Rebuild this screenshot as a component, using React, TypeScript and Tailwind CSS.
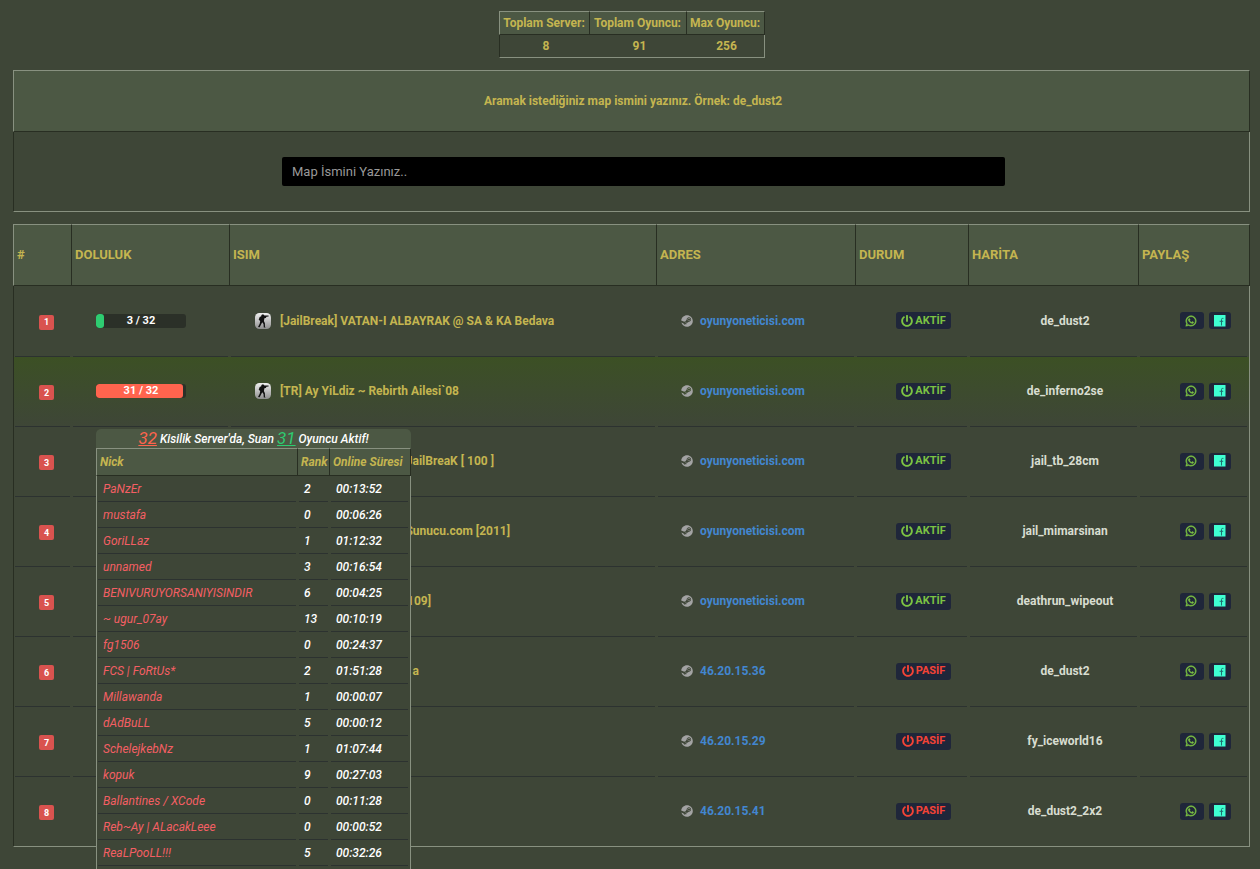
import { FaPowerOff, FaSteam, FaWhatsapp } from "react-icons/fa";

type Server = {
  bar: string;
  fill: string;
  name: string;
  nameClass?: string;
  address: string;
  active: boolean;
  map: string;
};

const low = "bg-[#2ecc71] w-[9%]";
const full = "bg-[#ff644e] w-[97%]";

const servers: Server[] = [
  { bar: "3 / 32", fill: low, name: "[JailBreak] VATAN-I ALBAYRAK @ SA & KA Bedava", address: "oyunyoneticisi.com", active: true, map: "de_dust2" },
  { bar: "31 / 32", fill: full, name: "[TR] Ay YiLdiz ~ Rebirth Ailesi`08", address: "oyunyoneticisi.com", active: true, map: "de_inferno2se" },
  { bar: "", fill: low, name: "JailBreaK [ 100 ]", nameClass: "w-[214px] text-right", address: "oyunyoneticisi.com", active: true, map: "jail_tb_28cm" },
  { bar: "", fill: low, name: "Sunucu.com [2011]", nameClass: "w-[230px] text-right", address: "oyunyoneticisi.com", active: true, map: "jail_mimarsinan" },
  { bar: "", fill: low, name: "109]", nameClass: "w-[151px] text-right", address: "oyunyoneticisi.com", active: true, map: "deathrun_wipeout" },
  { bar: "", fill: low, name: "a", nameClass: "w-[139px] text-right", address: "46.20.15.36", active: false, map: "de_dust2" },
  { bar: "", fill: low, name: "", address: "46.20.15.29", active: false, map: "fy_iceworld16" },
  { bar: "", fill: low, name: "", address: "46.20.15.41", active: false, map: "de_dust2_2x2" },
];

const players: [string, number, string][] = [
  ["PaNzEr", 2, "00:13:52"],
  ["mustafa", 0, "00:06:26"],
  ["GoriLLaz", 1, "01:12:32"],
  ["unnamed", 3, "00:16:54"],
  ["BENIVURUYORSANIYISINDIR", 6, "00:04:25"],
  ["~ ugur_07ay", 13, "00:10:19"],
  ["fg1506", 0, "00:24:37"],
  ["FCS | FoRtUs*", 2, "01:51:28"],
  ["Millawanda", 1, "00:00:07"],
  ["dAdBuLL", 5, "00:00:12"],
  ["SchelejkebNz", 1, "01:07:44"],
  ["kopuk", 9, "00:27:03"],
  ["Ballantines / XCode", 0, "00:11:28"],
  ["Reb~Ay | ALacakLeee", 0, "00:00:52"],
  ["ReaLPooLL!!!", 5, "00:32:26"],
];

const th =
  "border-t border-t-[#889180] border-r border-r-[#282e22] border-b border-b-[#282e22] first:border-l first:border-l-[#889180] bg-[#4c5844] text-[#c4b550] font-bold";

const line =
  "relative after:absolute after:bottom-0 after:left-px after:right-[2px] after:h-px after:bg-[#2c3230]";

function SoldierIcon() {
  return (
    <svg viewBox="0 0 16 16" className="size-4 shrink-0" aria-hidden="true">
      <defs>
        <linearGradient id="tile" x1="0" y1="0" x2="0" y2="1">
          <stop offset="0" stopColor="#f0f0f0" />
          <stop offset="1" stopColor="#8e8e8e" />
        </linearGradient>
      </defs>
      <rect width="16" height="16" rx="4.5" fill="url(#tile)" />
      <path
        d="M6.4 1.9 8 1.2 9 1.9 9.3 2.6 13.6 2.6V3.5L11.5 3.7 10.8 4.9 9.4 5.2 8.9 7.9 9.9 10.2 10 13.8 10.7 14.6H8.8L8.5 11 7.2 9.2 6.2 11.3 4.6 14.3 3 14 4.7 10.8 5.2 8 3.7 6.8 4.7 4 6.3 3.3Z"
        fill="#111"
      />
    </svg>
  );
}

function FacebookIcon() {
  return (
    <svg viewBox="0 0 12 12" className="size-3" aria-hidden="true">
      <path d="M0 0h11.5v11.5H0z" fill="#3fffd2" />
      <path d="M9.4 3.4H8.6Q7.5 3.4 7.5 4.5V10.5M5.6 6.3H9.2" fill="none" stroke="#1f6f70" strokeWidth="1" />
    </svg>
  );
}

function PlayerPopup() {
  return (
    <div className="absolute top-[45px] left-0 z-10 w-[315px] rounded-t-[5px] bg-[#3e4637] text-[12px] italic">
      <div className="flex h-[19px] items-center justify-center gap-[3px] rounded-t-[5px] bg-[#4c5844] font-medium text-white">
        <u className="text-[17px] leading-[19px] font-normal text-[#ff644e]">32</u>
        <span>Kisilik Server'da, Suan</span>
        <u className="text-[17px] leading-[19px] font-normal text-[#2ecc71]">31</u>
        <span>Oyuncu Aktif!</span>
      </div>
      <table className="w-full table-fixed border-separate border-spacing-0 text-left">
        <colgroup>
          <col className="w-[202px]" />
          <col className="w-[32px]" />
          <col className="w-[81px]" />
        </colgroup>
        <thead>
          <tr className="h-[28px]">
            <th className={th + " pl-[3px]"}>Nick</th>
            <th className={th + " pl-[3px]"}>Rank</th>
            <th className={th + " pl-[3px]"}>Online Süresi</th>
          </tr>
        </thead>
        <tbody>
          {players.map(([nick, rank, time]) => (
            <tr key={nick} className="h-[26px]">
              <td className={line + " border-l border-l-[#889180] pl-[6px] text-[#f45f64]"}>{nick}</td>
              <td className={line + " pl-[6px] font-medium text-white"}>{rank}</td>
              <td className={line + " border-r border-r-[#889180] pl-[6px] font-medium text-white"}>{time}</td>
            </tr>
          ))}
        </tbody>
      </table>
      <div className="h-8 border-x border-[#889180]" />
    </div>
  );
}

function Row({ server, index }: { server: Server; index: number }) {
  const hovered = index === 1;
  const last = index === servers.length - 1;
  const cell =
    line + (index === 0 ? " h-[71px]" : " h-[70px]") + (last ? " border-b border-b-[#889180] pb-px after:hidden" : " pb-[2px]");
  return (
    <tr className={hovered ? "bg-linear-to-b from-[#3c5024] to-[#3e4637]" : ""}>
      <td className={cell + " border-l border-l-[#282e22] pt-[3px] pl-[25px]"}>
        <span className="flex size-[15px] items-center justify-center rounded-[2px] bg-[#d9534f] text-[9px] font-bold text-white">
          {index + 1}
        </span>
      </td>
      <td className={cell + " pl-6"}>
        <div className="relative h-[14px] w-[90px]">
          <div className="h-full overflow-hidden rounded-[3px] bg-[#2b3028]">
            <div className={"h-full rounded-[3px] " + server.fill} />
          </div>
          <span className="absolute inset-0 flex items-center justify-center text-[11px] font-bold text-white">
            {server.bar}
          </span>
          {hovered && <PlayerPopup />}
        </div>
      </td>
      <td className={cell + " pl-[25px]"}>
        <div className="flex items-center gap-[9px] font-bold text-[#c4b550]">
          <SoldierIcon />
          <span className={server.nameClass}>{server.name}</span>
        </div>
      </td>
      <td className={cell + " pl-6"}>
        <div className="flex items-center gap-[7px]">
          <FaSteam className="size-3 text-[#a3a3a3]" aria-hidden="true" />
          <a href="#" className="font-bold text-[#4286d0]">{server.address}</a>
        </div>
      </td>
      <td className={cell + " pl-[22px]"}>
        <div className="flex justify-center">
          <span
            className={
              "flex h-[17px] w-[55px] items-center justify-center gap-[2px] rounded-[3px] bg-[#1f263a] text-[11px] font-bold " +
              (server.active ? "text-[#7cc243]" : "text-[#f44336]")
            }
          >
            <FaPowerOff className="size-3" aria-hidden="true" />
            {server.active ? "AKTİF" : "PASİF"}
          </span>
        </div>
      </td>
      <td className={cell + " pl-[22px] text-center font-bold text-[#d8ddd0]"}>{server.map}</td>
      <td className={cell + " border-r border-r-[#889180] pl-[22px]"}>
        <div className="flex justify-center gap-[5px]">
          <a href="#" aria-label="WhatsApp" className="flex h-[17px] w-6 items-center rounded-[3px] bg-[#1f263a] pl-[5px] text-[#7cc243]">
            <FaWhatsapp className="size-3" stroke="currentColor" strokeWidth={20} />
          </a>
          <a href="#" aria-label="Facebook" className="flex h-[17px] w-[22px] items-center justify-center rounded-[3px] bg-[#1f263a]">
            <FacebookIcon />
          </a>
        </div>
      </td>
    </tr>
  );
}

export default function App() {
  return (
    <main className="min-h-screen overflow-hidden bg-[#3e4637] pt-[11px] pr-[10px] pb-[22px] pl-[13px] font-['Roboto','Noto_Sans',sans-serif] text-[12px] leading-4">
      <table className="mx-auto mb-3 border-separate border-spacing-0 text-center font-bold text-[#c4b550]">
        <thead>
          <tr className="h-[24px]">
            <th className={th + " w-[91px] whitespace-nowrap"}>Toplam Server:</th>
            <th className={th + " w-[97px] whitespace-nowrap"}>Toplam Oyuncu:</th>
            <th className={th + " w-[78px] whitespace-nowrap"}>Max Oyuncu:</th>
          </tr>
        </thead>
        <tbody>
          <tr className="h-[23px]">
            <td className="border-b border-l border-b-[#889180] border-l-[#282e22] pl-[3px]">8</td>
            <td className="border-b border-b-[#889180] pl-[3px]">91</td>
            <td className="border-r border-b border-[#889180] pl-[3px]">256</td>
          </tr>
        </tbody>
      </table>

      <section className="mb-3">
        <label
          htmlFor="map"
          className="flex h-[62px] items-center justify-center border border-t-[#889180] border-r-[#282e22] border-b-[#282e22] border-l-[#889180] bg-[#4c5844] pl-[3px] font-bold text-[#c4b550]"
        >
          Aramak istediğiniz map ismini yazınız. Örnek: de_dust2
        </label>
        <div className="flex h-[80px] items-center justify-center border-r border-b border-l border-r-[#889180] border-b-[#889180] border-l-[#282e22] pl-6">
          <input
            id="map"
            type="text"
            placeholder="Map İsmini Yazınız.."
            className="h-[29px] w-[723px] rounded-[2px] bg-black px-[10px] text-[13px] text-white outline-none placeholder:text-[#999]"
          />
        </div>
      </section>

      <table className="w-full table-fixed border-separate border-spacing-0 text-left">
        <colgroup>
          <col className="w-[59px]" />
          <col className="w-[158px]" />
          <col className="w-[427px]" />
          <col className="w-[199px]" />
          <col className="w-[113px]" />
          <col className="w-[170px]" />
          <col className="w-[111px]" />
        </colgroup>
        <thead>
          <tr className="h-[62px] text-[13px]">
            {["#", "DOLULUK", "ISIM", "ADRES", "DURUM", "HARİTA", "PAYLAŞ"].map((title) => (
              <th key={title} className={th + " pl-[3px]"}>{title}</th>
            ))}
          </tr>
        </thead>
        <tbody>
          {servers.map((server, i) => (
            <Row key={i} server={server} index={i} />
          ))}
        </tbody>
      </table>
    </main>
  );
}
